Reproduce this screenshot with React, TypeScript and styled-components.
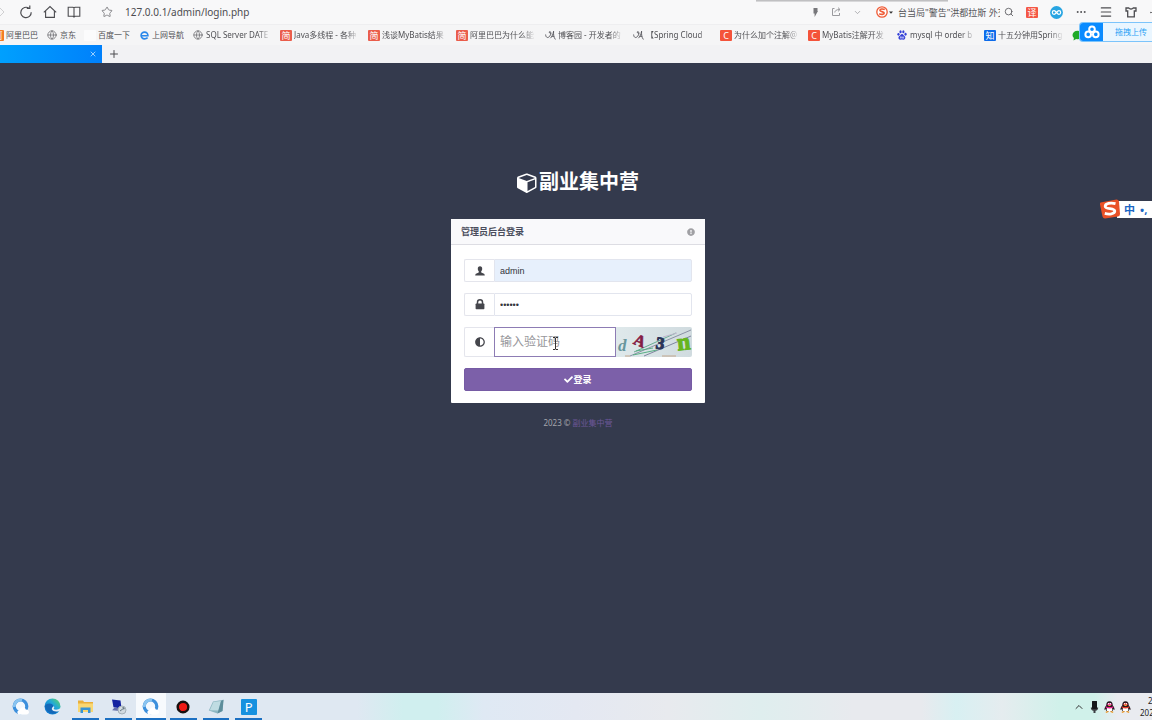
import React from 'react';
import styled, { createGlobalStyle } from 'styled-components';
import { FaCheck, FaExclamationCircle, FaAdjust } from 'react-icons/fa';
import { Menu, Search, Star, Globe, ChevronDown, ChevronUp, Ellipsis, Plus, X } from 'lucide-react';

const sans = `"Noto Sans", "Noto Sans CJK SC", sans-serif`;

const GlobalStyle = createGlobalStyle`
  * { box-sizing: border-box; }
  body { margin: 0; background: #343a4d; font-family: ${sans}; overflow: hidden; }
  button, input { font-family: inherit; }
`;

const Screen = styled.div`
  min-height: 100vh;
  display: flex;
  flex-direction: column;
  overflow: hidden;
`;

const Chrome = styled.header`
  background: #f2f2f4;
  position: relative;
`;

const AddressBar = styled.div`
  height: 25px;
  display: flex;
  align-items: center;
  justify-content: space-between;
  background: #f8f8f9;
  border-bottom: 1px solid #eeeef0;
  overflow: hidden;
`;

const WindowShadow = styled.div`
  position: absolute;
  top: 0;
  right: 204px;
  width: 192px;
  height: 2px;
  background: linear-gradient(#b4b4b6, #e4e4e6);
`;

const ToolGroup = styled.div<{ $gap: number }>`
  display: flex;
  align-items: center;
  gap: ${p => p.$gap}px;
`;

const IconButton = styled.button<{ $color?: string }>`
  border: 0;
  padding: 0;
  background: none;
  display: flex;
  align-items: center;
  justify-content: center;
  flex: none;
  color: ${p => p.$color ?? '#4c4c50'};
`;

const NavTools = styled(ToolGroup)`
  flex: 1;
`;

const ForwardButton = styled(IconButton)`
  width: 9px;
  justify-content: flex-start;
`;

const StarButton = styled(IconButton)`
  margin-left: 10px;
`;

const UrlInput = styled.input`
  border: 0;
  background: none;
  outline: none;
  padding: 0 2px;
  width: 300px;
  font-size: 10px;
  color: #4c4c50;
`;

const RightTools = styled(ToolGroup)`
  flex: none;
  margin-right: -6px;
`;

const NewsBox = styled.div`
  display: flex;
  align-items: center;
  width: 138px;
  height: 16px;
  margin-left: 2px;
  color: #55555a;
  font-size: 9px;
  gap: 1px;
`;

const NewsText = styled.span`
  flex: 1;
  padding-left: 4px;
  white-space: nowrap;
  overflow: hidden;
`;

const SearchMark = styled.span`
  display: flex;
  padding-left: 3px;
`;

const Bookmarks = styled.nav`
  height: 20px;
  display: flex;
  align-items: center;
  gap: 8px;
  margin-left: -8px;
  overflow: hidden;
  background: #f5f5f6;
`;

const BookmarkLink = styled.a`
  display: flex;
  align-items: center;
  gap: 2px;
  flex: none;
  color: #505054;
  font-size: 8px;
  line-height: 12px;
  text-decoration: none;
`;

const BookmarkLabel = styled.span<{ $cut?: boolean }>`
  white-space: nowrap;
  overflow: hidden;
  ${p => p.$cut && `
    width: 66px;
    mask-image: linear-gradient(90deg, #000 78%, transparent);
  `}
`;

const Tile = styled.span<{ $bg: string }>`
  width: 12px;
  height: 11px;
  display: flex;
  align-items: center;
  justify-content: center;
  flex: none;
  border-radius: 1px;
  background: ${p => p.$bg};
  color: #fff;
  font-size: 9px;
  line-height: 11px;
`;

const Glyph = styled.span`
  width: 12px;
  height: 12px;
  display: flex;
  align-items: center;
  justify-content: center;
  flex: none;
`;

const TabBar = styled.div`
  height: 18px;
  display: flex;
  align-items: center;
`;

const ActiveTab = styled.div`
  width: 102px;
  height: 18px;
  display: flex;
  align-items: center;
  justify-content: flex-end;
  padding-right: 5px;
  background: linear-gradient(90deg, #00a0fe, #0080fb);
`;

const NewTab = styled(IconButton)`
  margin-left: 6px;
`;

const UploadWidget = styled.button`
  position: absolute;
  top: 22px;
  right: 0;
  width: 73px;
  height: 20px;
  display: flex;
  align-items: stretch;
  padding: 0;
  border: 1px solid #7cc4fb;
  border-right: 0;
  border-radius: 4px 0 0 4px;
  background: #eaf6ff;
  color: #2ba2f5;
  font-size: 8px;
  overflow: hidden;
`;

const UploadIcon = styled.span`
  width: 23px;
  display: flex;
  align-items: center;
  justify-content: center;
  flex: none;
  background: #0a8bff;
`;

const UploadText = styled.span`
  padding-left: 12px;
  line-height: 18px;
  white-space: nowrap;
`;

const Page = styled.main`
  flex: 1;
  display: flex;
  flex-direction: column;
  align-items: center;
  padding: 104px 0 0 4px;
  background: #343a4d;
`;

const Brand = styled.h1`
  display: flex;
  align-items: center;
  gap: 1px;
  margin: 0;
  color: #fff;
  font-size: 20px;
  line-height: 30px;
  font-weight: 700;
`;

const Panel = styled.form`
  width: 254px;
  margin-top: 22px;
  background: #fff;
  border-radius: 1px;
`;

const PanelHead = styled.div`
  height: 26px;
  display: flex;
  align-items: center;
  justify-content: space-between;
  padding: 0 10px;
  background: #f9f9fb;
  border-bottom: 1px solid #dddde3;
  color: #a0a0a4;
`;

const PanelTitle = styled.h2`
  margin: 0;
  font-size: 9px;
  line-height: 14px;
  font-weight: 700;
  color: #4a4d5c;
`;

const PanelBody = styled.div`
  display: flex;
  flex-direction: column;
  gap: 11px;
  padding: 14px 13px 12px;
`;

const Field = styled.div<{ $tall?: boolean }>`
  display: flex;
  height: ${p => (p.$tall ? 30 : 23)}px;
`;

const Addon = styled.label`
  width: 30px;
  display: flex;
  align-items: center;
  justify-content: center;
  flex: none;
  border: 1px solid #e4e5ec;
  border-right: 0;
  border-radius: 2px 0 0 2px;
  color: #45464c;
`;

const TextInput = styled.input<{ $filled?: boolean; $active?: boolean }>`
  flex: 1;
  min-width: 0;
  padding: 0 5px;
  outline: none;
  border: 1px solid ${p => (p.$active ? '#8d7cb4' : '#e2e5ee')};
  border-radius: ${p => (p.$active ? '0' : '0 2px 2px 0')};
  background: ${p => (p.$filled ? '#e7f0fc' : '#fff')};
  color: #33353c;
  font-family: "Liberation Sans", "Noto Sans CJK SC", sans-serif;
  font-size: ${p => (p.$active ? 12 : 9)}px;
  &::placeholder { color: #97979b; opacity: 1; }
`;

const CaptchaButton = styled(IconButton)`
  width: 76px;
  height: 30px;
  overflow: hidden;
  border-radius: 0 2px 2px 0;
`;

const SubmitButton = styled.button`
  height: 23px;
  display: flex;
  align-items: center;
  justify-content: center;
  padding: 0;
  border: 1px solid #765ba4;
  border-radius: 2px;
  background: #7c60a9;
  color: #fff;
  font-size: 9px;
  font-weight: 700;
`;

const Copyright = styled.p`
  margin: 13px 0 0;
  font-size: 8px;
  line-height: 14px;
  color: #a3a4ab;
`;

const CopyrightLink = styled.a`
  color: #6d5799;
  text-decoration: none;
`;

const CaptchaWrap = styled.div`
  position: relative;
  flex: 1;
  min-width: 0;
  display: flex;
`;

const TextCursor = styled.svg`
  position: absolute;
  left: 58px;
  top: 10px;
`;

const ImeBar = styled.div`
  position: absolute;
  right: 0;
  top: 198px;
  width: 53px;
  height: 22px;
  display: flex;
  align-items: center;
`;

const ImeStrip = styled.div`
  flex: 1;
  height: 17px;
  display: flex;
  align-items: center;
  gap: 5px;
  margin-left: -4px;
  padding-left: 7px;
  background: #fff;
  color: #1a66c4;
  font-size: 11px;
  line-height: 17px;
  font-weight: 700;
  white-space: nowrap;
  overflow: hidden;
`;

const ImeLogo = styled.svg`
  position: relative;
  flex: none;
`;

const Taskbar = styled.footer`
  height: 27px;
  display: flex;
  justify-content: space-between;
  overflow: hidden;
  background: linear-gradient(90deg, #dfe8f2 0%, #dfe8f2 31%, #d0efef 35%, #d0efef 38%, #dfe9f4 42%, #e4e8f2 50%, #e8eaee 58%, #dfeeee 66%, #e8eaee 74%, #e8eaee 80%, #d8f0f2 83%, #e5ecef 87%, #d0f1ea 92%, #d0f1ea 95%, #e9ebf0 97%, #e9ebf0 100%);
`;

const TaskList = styled.div`
  width: 265px;
  display: grid;
  grid-template-columns: repeat(8, 1fr);
  padding-left: 4px;
`;

const TaskButton = styled.button<{ $open?: boolean; $current?: boolean }>`
  display: flex;
  align-items: center;
  justify-content: center;
  margin: 0 ${p => (p.$current ? 1 : 3)}px;
  padding: 2px 0 0;
  border: 0;
  border-bottom: 2px solid ${p => (p.$open ? '#1c70c2' : 'transparent')};
  background: ${p => (p.$current ? '#f7fafd' : 'none')};
`;

const Tray = styled.div`
  display: flex;
  align-items: center;
  gap: 5px;
  margin-right: -12px;
  color: #333;
`;

const Clock = styled.div`
  width: 25px;
  margin-left: 3px;
  padding-left: 1px;
  font-size: 8px;
  line-height: 12px;
  color: #222;
  white-space: nowrap;
`;

const ClockTime = styled.div`
  padding-left: 8px;
`;

const CubeIcon = () => (
  <svg width="21" height="21" viewBox="0 0 1792 1792" fill="currentColor">
    <path d="M896 1629l640-349v-636l-640 233v752zM832 764l698-254-698-254-698 254zM1664 512v768q0 35-18 65t-49 47l-704 384q-28 16-61 16t-61-16l-704-384q-31-17-49-47t-18-65v-768q0-40 23-73t61-47l704-256q22-8 44-8t44 8l704 256q38 14 61 47t23 73z" />
  </svg>
);

const ForwardIcon = () => (
  <svg width="5" height="10" viewBox="0 0 5 10" fill="none" stroke="currentColor"><path d="M0 1l4 4-4 4" /></svg>
);

const ReloadIcon = () => (
  <svg width="14" height="14" viewBox="0 0 14 14" fill="none" stroke="currentColor" strokeWidth="1.2">
    <path d="M12.2 7.2A5.2 5.2 0 1 1 10 3.200M7.800 3.400h3V.4" />
  </svg>
);

const HomeIcon = () => (
  <svg width="14" height="14" viewBox="0 0 14 14" fill="none" stroke="currentColor" strokeWidth="1.1">
    <path d="M.8 7.4 7 1.6l6.2 5.8M2.6 6v6.4h8.8V6" />
  </svg>
);

const BookIcon = () => (
  <svg width="14" height="14" viewBox="0 0 14 14" fill="none" stroke="currentColor" strokeWidth="1.1">
    <path d="M7 2.500v9.500M1.200 2.200H6L7 3l1-.8h4.800v9H8l-1 .8-1-.8H1.200z" />
  </svg>
);

const BoltIcon = () => (
  <svg width="7" height="9" viewBox="0 0 7 9" fill="currentColor">
    <path d="M1.500 0h4v3H6L2.600 9V5.500H1.500z" />
  </svg>
);

const ShareIcon = () => (
  <svg width="10" height="10" viewBox="0 0 10 10" fill="none" stroke="currentColor">
    <path d="M3.5 1.5h-2v7h7V6M3.8 5.5C4 3.5 5.5 2.5 8.8 2.5M7 .6l2 1.9-2 1.9" />
  </svg>
);

const ShirtIcon = () => (
  <svg width="12" height="12" viewBox="0 0 12 12" fill="none" stroke="currentColor" strokeWidth="1.300">
    <path d="M1 2h2.800c.8 1.300 3.600 1.300 4.400 0H11v3H9.300v5.800H2.700V5H1z" />
  </svg>
);

const SogouRound = () => (
  <svg width="12" height="12" viewBox="0 0 12 12">
    <circle cx="6" cy="6" r="5.2" fill="#fff" stroke="#ef5a35" strokeWidth="1.3" />
    <path d="M8.8 3.6C7 2.8 4 2.7 3.9 4.3c0 1.6 4.3 1 4.3 2.8 0 1.6-3 1.6-5 .7" fill="none" stroke="#ef5a35" strokeWidth="1.6" />
  </svg>
);

const CaretIcon = () => (
  <svg width="4" height="3" viewBox="0 0 4 3"><path d="M0 .5h4L2 2.8z" fill="#333" /></svg>
);

const InfinityBadge = () => (
  <svg width="13" height="13" viewBox="0 0 13 13">
    <circle cx="6.5" cy="6.5" r="6.4" fill="#28a5e2" />
    <path d="M6.5 6.5C5.4 5.2 4.8 4.7 4.1 4.7a1.8 1.8 0 0 0 0 3.6c.7 0 1.3-.5 2.4-1.8s1.7-1.8 2.4-1.8a1.8 1.8 0 0 1 0 3.6c-.7 0-1.3-.5-2.4-1.8z" fill="none" stroke="#fff" strokeWidth="1.2" />
  </svg>
);

const BrowserE = () => (
  <svg width="9" height="9" viewBox="0 0 10 10" fill="none" stroke="#2b88ea" strokeWidth="1.800">
    <path d="M1.400 5.300h7.400C8.800 2.700 7.200 1.200 5 1.200A3.800 3.800 0 0 0 5 8.800c1.600 0 2.600-.5 3.500-1.400" />
  </svg>
);

const CnblogsIcon = () => (
  <svg width="11" height="11" viewBox="0 0 11 11" fill="none" stroke="#55555a" strokeWidth=".9">
    <path d="M.6 4.500c.2 3.500 2.600 3.800 4.200 1.600C6 4.400 6.400 1.800 5 1.500 3.600 1.500 4.400 3.800 6.200 3.800M8.600 1.200c-.2 3 0 6 1.800 8.300M8.600 1.200C8 4.500 7 6.800 5.400 8.200M6.500 6.300h2.600" />
  </svg>
);

const PawIcon = () => (
  <svg width="10" height="10" viewBox="0 0 11 11" fill="#3440d8">
    <ellipse cx="1.6" cy="4.800" rx="1.200" ry="1.600" />
    <ellipse cx="3.900" cy="2" rx="1.200" ry="1.700" />
    <ellipse cx="7" cy="2" rx="1.200" ry="1.700" />
    <ellipse cx="9.400" cy="4.600" rx="1.200" ry="1.600" />
    <path d="M5.500 4.300c1.500 0 1.600 1.500 2.800 2.400 1.600 1.300.8 4-1.200 3.900-1.100 0-2.300-.2-3.300 0-2.200.2-3-2.500-1.200-3.900C3.900 5.800 4 4.300 5.500 4.300z" />
    <path d="M3.800 7.400h1v1.600h-1zM6 7.200v1.800h1.300V7.200" fill="none" stroke="#fff" strokeWidth=".6" />
  </svg>
);

const WeChatIcon = () => (
  <svg width="12" height="11" viewBox="0 0 12 11" fill="#1faa28">
    <ellipse cx="5.500" cy="5" rx="5" ry="4.300" /><path d="M2 7.500 1.500 10.500 5 8.500z" />
  </svg>
);

const CloudRings = () => (
  <svg width="16" height="14" viewBox="0 0 16 14" fill="none" stroke="#fff" strokeWidth="2">
    <circle cx="8" cy="4.200" r="2.800" /><circle cx="4.200" cy="9.400" r="2.800" /><circle cx="11.800" cy="9.400" r="2.800" />
  </svg>
);

const UserIcon = () => (
  <svg width="10" height="10" viewBox="0 0 10 10" fill="currentColor">
    <path d="M5 .3c1.500 0 2.300 1.100 2.200 2.600C7.100 4.200 6.500 5 6.100 5.500c0 .9.200 1.200 1.300 1.600C8.900 7.600 9.700 8 9.800 9.500H.2C.3 8 1.100 7.600 2.600 7.100c1.100-.4 1.300-.7 1.300-1.600C3.500 5 2.900 4.200 2.800 2.900 2.700 1.400 3.500.3 5 .3z" />
  </svg>
);

const LockIcon = () => (
  <svg width="10" height="11" viewBox="0 0 10 11">
    <path d="M2.500 5V3.300a2.500 2.500 0 0 1 5 0V5" fill="none" stroke="currentColor" strokeWidth="1.500" />
    <rect x=".6" y="4.600" width="8.800" height="5.600" rx=".7" fill="currentColor" />
  </svg>
);

const Captcha = () => (
  <svg width="76" height="30" viewBox="0 0 76 30" role="img" aria-label="dA3n">
    <defs>
      <linearGradient id="paper"><stop offset="0" stopColor="#dfe9eb" /><stop offset="1" stopColor="#d0dbdf" /></linearGradient>
    </defs>
    <rect width="76" height="30" fill="url(#paper)" />
    <g fill="none" strokeWidth="1">
      <path d="M18 25 60 6" stroke="#68ab91" />
      <path d="M14 29 75 3" stroke="#8b91a5" />
      <path d="M28 29 75 9" stroke="#8085a0" />
      <path d="M20 24 37 21M17 28l24-5" stroke="#58ae85" />
      <path d="M46 29h14M9 29h5" stroke="#c2a68c" />
      <path d="M47 10 61 6" stroke="#c0b7ce" />
    </g>
    <g fontFamily="Liberation Serif, serif" fontWeight="700">
      <text x="2" y="24" fontSize="17" fill="#68969d" fontStyle="italic">d</text>
      <text x="18" y="19" fontSize="16" fill="#851c46" stroke="#851c46" strokeWidth=".6" transform="rotate(22 24 14)">A</text>
      <text x="40" y="22" fontSize="17" fill="#2b3458" stroke="#2b3458" strokeWidth="1" transform="rotate(8 45 16)">3</text>
      <text x="61" y="23" fontSize="24" fill="#66b51e" stroke="#66b51e" strokeWidth="1" transform="rotate(-6 67 16)">n</text>
    </g>
  </svg>
);

const QQBrowserIcon = () => (
  <svg width="17" height="17" viewBox="0 0 17 17">
    <circle cx="8.500" cy="8.300" r="6.300" fill="#f2f8fe" stroke="#3c8fdc" strokeWidth="3.200" />
    <path d="M2.300 9A6.300 6.300 0 0 1 10 2.200" fill="none" stroke="#8ac4f0" strokeWidth="3" />
    <path d="M7.500 16.500c-3-.3-2.800-4.300.3-4.500C8.500 8.500 13 8.300 13.800 11.500c4 0 4.300 5 .5 5z" fill="#fff" />
  </svg>
);

const EdgeIcon = () => (
  <svg width="17" height="17" viewBox="0 0 17 17">
    <defs>
      <linearGradient id="edge" x1="0" y1="1" x2="1" y2="0"><stop offset=".2" stopColor="#127bd0" /><stop offset=".6" stopColor="#22a8d8" /><stop offset="1" stopColor="#63d957" /></linearGradient>
    </defs>
    <circle cx="8.500" cy="8.500" r="8" fill="url(#edge)" />
    <path d="M.8 8C3 4.500 9 4.700 9.500 8.500c-1.500 1.500-.5 3.700 3.300 3.500 1.200 0 2-.3 2.700-.8-3 6.700-12.500 6-14.700-3.200z" fill="#1368b8" />
    <path d="M9.800 8.200c1.200 1.300-.2 2-.1 2.600.5 1.200 4.600 1.400 6.800-1.100v2.600c-2.500 1.800-7.500 1.800-8.700-1 0-1.400.8-2.700 2-3.100z" fill="#e4edf4" />
  </svg>
);

const FolderIcon = () => (
  <svg width="17" height="15" viewBox="0 0 17 15">
    <path d="M1 1.500h5l1 1.500h9v10H1z" fill="#e9af3c" />
    <path d="M1 4.500h15v8.500H1z" fill="#f9d772" />
    <path d="M3.500 14V8.500h10V14h-2.500v-3H6v3z" fill="#3794d5" />
  </svg>
);

const ScreenToolIcon = () => (
  <svg width="17" height="17" viewBox="0 0 17 17">
    <path d="m2 1.500 8.500 1 1 8-8-1.200z" fill="#1523a0" />
    <path d="m4.500 9.500 4 .7.700 2.800-7-.8z" fill="#6670aa" />
    <circle cx="12" cy="12" r="4" fill="#d2dae0" stroke="#a5b0b8" />
    <path d="m10 13 4-3M12.500 9.500l1.700.4-.4 1.600" fill="none" stroke="#647681" />
  </svg>
);

const RecordIcon = () => (
  <svg width="14" height="14" viewBox="0 0 15 15">
    <circle cx="7.500" cy="7.500" r="5.700" fill="#f01a16" stroke="#16100f" strokeWidth="2.600" />
  </svg>
);

const NotebookIcon = () => (
  <svg width="17" height="15" viewBox="0 0 17 15">
    <path d="M5 2.500 15.500.8 14.500 12 9.500 14.500.8 11.500z" fill="#8db7c2" />
    <path d="M5.500 3 13 2l-2.500 9.500-8.700-.3z" fill="#bfdce2" />
    <path d="m13 2 2.500-1.200L14.500 12l-5 2.500z" fill="#5d8d9b" />
  </svg>
);

const AppTile = styled.span`
  width: 16px;
  height: 16px;
  display: flex;
  align-items: center;
  justify-content: center;
  border-radius: 1px;
  background: #1691df;
  color: #fff;
  font-size: 13px;
  line-height: 16px;
`;

const MicIcon = () => (
  <svg width="9" height="12" viewBox="0 0 9 12" fill="#15171a">
    <rect x="2" y="0" width="5" height="9" rx="1" /><path d="M.8 6.500h7.400c0 2-1 3-2.700 3.300V12h-2V9.800C1.800 9.500.8 8.500.8 6.500z" fill="#3c3e42" /><rect x="2" y="0" width="5" height="8" rx="1" />
  </svg>
);

const PenguinIcon = ({ scarf }: { scarf: string }) => (
  <svg width="11" height="12" viewBox="0 0 11 12">
    <path d="M5.500.3C3 .3 2.200 2 2.300 4.300 1 6 .2 7.500.5 9l1.300-.8C2 10.200 3.500 11 5.500 11s3.500-.8 3.700-2.800l1.300.8c.3-1.500-.5-3-1.800-4.700C8.800 2 8 .3 5.500.3z" fill="#241820" />
    <ellipse cx="5.500" cy="8.500" rx="2.800" ry="2.400" fill="#fff" />
    <ellipse cx="5.500" cy="3.200" rx="2.100" ry="1.500" fill={scarf} />
    <circle cx="4.600" cy="2.800" r=".7" fill="#fff" /><circle cx="6.400" cy="2.800" r=".7" fill="#fff" />
    <path d="M3.800 4h3.400L5.500 5.200z" fill="#f6b52a" />
    <path d="M1.800 5.200c2.400 1.200 5 1.200 7.400 0v1.500c-2.400 1-5 1-7.400 0z" fill={scarf} />
    <path d="M1.800 11.400 4.500 10.500M9.200 11.400 6.500 10.500" stroke="#f29a22" strokeWidth="1.200" />
  </svg>
);

const jian = <Tile $bg="#ea5d4b">简</Tile>;
const csdn = <Tile $bg="#f4533a">C</Tile>;
const globe = <Glyph><Globe size={10} strokeWidth={2} color="#77777b" /></Glyph>;
const cnblogs = <Glyph><CnblogsIcon /></Glyph>;

const bookmarks: { icon: React.ReactNode; label: string; cut?: boolean }[] = [
  { icon: <Tile $bg="#f47b25">阿</Tile>, label: '阿里巴巴' },
  { icon: globe, label: '京东' },
  { icon: <Tile $bg="#fbfbfc" />, label: '百度一下' },
  { icon: <Glyph><BrowserE /></Glyph>, label: '上网导航' },
  { icon: globe, label: 'SQL Server DATE', cut: true },
  { icon: jian, label: 'Java多线程 - 各种', cut: true },
  { icon: jian, label: '浅谈MyBatis结果', cut: true },
  { icon: jian, label: '阿里巴巴为什么能', cut: true },
  { icon: cnblogs, label: '博客园 - 开发者的', cut: true },
  { icon: cnblogs, label: '【Spring Cloud', cut: true },
  { icon: csdn, label: '为什么加个注解@', cut: true },
  { icon: csdn, label: 'MyBatis注解开发', cut: true },
  { icon: <Glyph><PawIcon /></Glyph>, label: 'mysql 中 order b', cut: true },
  { icon: <Tile $bg="#0d6bea">知</Tile>, label: '十五分钟用Spring', cut: true },
  { icon: <Glyph><WeChatIcon /></Glyph>, label: '' },
];

const tasks: { name: string; icon: React.ReactNode; open?: boolean; current?: boolean }[] = [
  { name: 'QQ Browser', icon: <QQBrowserIcon /> },
  { name: 'Edge', icon: <EdgeIcon /> },
  { name: 'Files', icon: <FolderIcon />, open: true },
  { name: 'Remote screen', icon: <ScreenToolIcon />, open: true },
  { name: 'QQ Browser window', icon: <QQBrowserIcon />, open: true, current: true },
  { name: 'Recorder', icon: <RecordIcon />, open: true },
  { name: 'Notebook', icon: <NotebookIcon />, open: true },
  { name: 'P', icon: <AppTile>P</AppTile>, open: true },
];

export default function App() {
  return (
    <Screen>
      <GlobalStyle />
      <Chrome>
        <AddressBar>
          <NavTools $gap={10}>
            <ForwardButton aria-label="Forward" $color="#d0d0d2"><ForwardIcon /></ForwardButton>
            <IconButton aria-label="Reload"><ReloadIcon /></IconButton>
            <IconButton aria-label="Home"><HomeIcon /></IconButton>
            <IconButton aria-label="Reading list"><BookIcon /></IconButton>
            <StarButton aria-label="Bookmark" $color="#88888c"><Star size={12} strokeWidth={2} /></StarButton>
            <UrlInput aria-label="Address" defaultValue="127.0.0.1/admin/login.php" />
          </NavTools>
          <RightTools $gap={12}>
            <IconButton aria-label="Speed mode" $color="#77777b"><BoltIcon /></IconButton>
            <IconButton aria-label="Share" $color="#9a9a9e"><ShareIcon /></IconButton>
            <IconButton aria-label="More actions" $color="#9a9a9e"><ChevronDown size={9} /></IconButton>
            <NewsBox>
              <SogouRound />
              <CaretIcon />
              <NewsText>台当局"警告"洪都拉斯 外交</NewsText>
              <SearchMark><Search size={10} strokeWidth={2} /></SearchMark>
            </NewsBox>
            <IconButton aria-label="Translate"><Tile $bg="#f45745">译</Tile></IconButton>
            <IconButton aria-label="Cloud"><InfinityBadge /></IconButton>
            <IconButton aria-label="Options"><Ellipsis size={12} /></IconButton>
            <IconButton aria-label="Menu"><Menu size={14} strokeWidth={2} /></IconButton>
            <IconButton aria-label="Skins"><ShirtIcon /></IconButton>
            <IconButton aria-label="Minimise"><Ellipsis size={9} /></IconButton>
          </RightTools>
        </AddressBar>
        <WindowShadow />
        <Bookmarks>
          {bookmarks.map((b, i) => (
            <BookmarkLink href="#" key={i}>
              {b.icon}
              <BookmarkLabel $cut={b.cut}>{b.label}</BookmarkLabel>
            </BookmarkLink>
          ))}
        </Bookmarks>
        <TabBar>
          <ActiveTab>
            <IconButton aria-label="Close tab" $color="#e4f3ff"><X size={8} /></IconButton>
          </ActiveTab>
          <NewTab aria-label="New tab"><Plus size={12} strokeWidth={2} /></NewTab>
        </TabBar>
        <UploadWidget>
          <UploadIcon><CloudRings /></UploadIcon>
          <UploadText>拖拽上传</UploadText>
        </UploadWidget>
      </Chrome>

      <Page>
        <Brand><CubeIcon />副业集中营</Brand>
        <Panel onSubmit={e => e.preventDefault()}>
          <PanelHead>
            <PanelTitle>管理员后台登录</PanelTitle>
            <FaExclamationCircle size={8} />
          </PanelHead>
          <PanelBody>
            <Field>
              <Addon htmlFor="user" aria-label="用户名"><UserIcon /></Addon>
              <TextInput id="user" $filled defaultValue="admin" />
            </Field>
            <Field>
              <Addon htmlFor="pass" aria-label="密码"><LockIcon /></Addon>
              <TextInput id="pass" type="password" defaultValue="123456" />
            </Field>
            <Field $tall>
              <Addon htmlFor="code" aria-label="验证码"><FaAdjust size={10} /></Addon>
              <CaptchaWrap>
                <TextInput id="code" $active placeholder="输入验证码" />
                <TextCursor width="7" height="13" viewBox="0 0 7 13" fill="none" stroke="#333">
                  <path d="M1 .5h2l.5.500.500-.500h2M3.500 1v11M1 12.500h2l.5-.500.500.500h2" />
                </TextCursor>
              </CaptchaWrap>
              <CaptchaButton type="button" aria-label="Refresh code"><Captcha /></CaptchaButton>
            </Field>
            <SubmitButton type="submit"><FaCheck size={9} />登录</SubmitButton>
          </PanelBody>
        </Panel>
        <Copyright>2023 © <CopyrightLink href="#">副业集中营</CopyrightLink></Copyright>
      </Page>

      <ImeBar>
        <ImeLogo width="22" height="22" viewBox="0 0 22 22">
          <path d="M1.500 4.500 17.500 1.500Q19.500 1.500 20 3.500L21 16Q21 18 19 18.500L6 20.500Q4 20.500 3.500 18.500L1 6.500Q.8 5 1.500 4.500z" fill="#e95127" />
          <path d="M16.500 5.700C12 4.600 6 5.200 6.200 8.500c.2 3 9.600 1.400 9.600 4.600 0 3-5.800 3.500-10 2.300" fill="none" stroke="#fff" strokeWidth="2.800" />
        </ImeLogo>
        <ImeStrip><span>中</span><span>•,</span></ImeStrip>
      </ImeBar>

      <Taskbar>
        <TaskList>
          {tasks.map(t => (
            <TaskButton key={t.name} aria-label={t.name} $open={t.open} $current={t.current}>{t.icon}</TaskButton>
          ))}
        </TaskList>
        <Tray>
          <ChevronUp size={12} strokeWidth={2} />
          <MicIcon />
          <PenguinIcon scarf="#e5208a" />
          <PenguinIcon scarf="#e23a2a" />
          <Clock><ClockTime>21:05</ClockTime>2023/3</Clock>
        </Tray>
      </Taskbar>
    </Screen>
  );
}
